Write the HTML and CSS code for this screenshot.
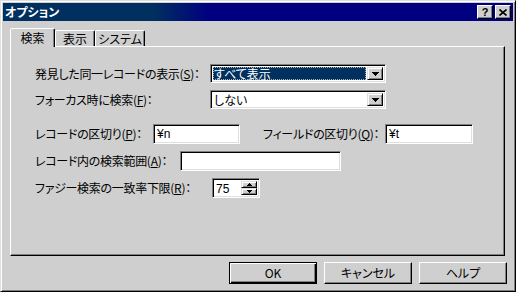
FILE: index.html
```html
<!DOCTYPE html>
<html lang="ja">
<head>
<meta charset="utf-8">
<title>オプション</title>
<link rel="stylesheet" href="styles.css">
</head>
<body>
<div class="window">
  <div class="titlebar">
    <span class="title">オプション</span>
    <div class="tbtns">
      <div class="tbtn"><span class="q">?</span></div>
      <div class="tbtn"><svg width="8" height="7" viewBox="0 0 8 7"><path d="M0.5 0.5L7.5 6.5M7.5 0.5L0.5 6.5" stroke="#000" stroke-width="1.6" fill="none"/></svg></div>
    </div>
  </div>
  <div class="content">
    <div class="tabs">
      <div class="tab active t1">検索</div>
      <div class="tab t2">表示</div>
      <div class="tab t3">システム</div>
    </div>
    <div class="panel">
      <div class="row">
        <span class="lbl w-combo">発見した同一レコードの表示(<u>S</u>)：</span>
        <div class="combo">
          <div class="combo-value sel">すべて表示</div>
          <div class="ddbtn"><svg width="7" height="4" viewBox="0 0 7 4"><path d="M0 0h7v1H0zM1 1h5v1H1zM2 2h3v1H2zM3 3h1v1H3z"/></svg></div>
        </div>
      </div>
      <div class="row">
        <span class="lbl w-combo">フォーカス時に検索(<u>F</u>)：</span>
        <div class="combo">
          <div class="combo-value">しない</div>
          <div class="ddbtn"><svg width="7" height="4" viewBox="0 0 7 4"><path d="M0 0h7v1H0zM1 1h5v1H1zM2 2h3v1H2zM3 3h1v1H3z"/></svg></div>
        </div>
      </div>
      <div class="row tall sep">
        <span class="lbl w-rec">レコードの区切り(<u>P</u>)：</span>
        <div class="field f-rec">¥n</div>
        <span class="lbl w-fld">フィールドの区切り(<u>Q</u>)：</span>
        <div class="field f-fld">¥t</div>
      </div>
      <div class="row tall">
        <span class="lbl w-range">レコード内の検索範囲(<u>A</u>)：</span>
        <div class="field f-range"></div>
      </div>
      <div class="row tall">
        <span class="lbl w-fuzzy">ファジー検索の一致率下限(<u>R</u>)：</span>
        <div class="field spin">
          <span class="spin-val">75</span>
          <div class="spinbtns">
            <div class="sbtn"><svg width="5" height="3" viewBox="0 0 5 3"><path d="M2 0h1v1H2zM1 1h3v1H1zM0 2h5v1H0z"/></svg></div>
            <div class="sbtn"><svg width="5" height="3" viewBox="0 0 5 3"><path d="M0 0h5v1H0zM1 1h3v1H1zM2 2h1v1H2z"/></svg></div>
          </div>
        </div>
      </div>
    </div>
    <div class="btnrow">
      <div class="btn default"><span>OK</span></div>
      <div class="btn"><span>キャンセル</span></div>
      <div class="btn"><span>ヘルプ</span></div>
    </div>
  </div>
</div>
</body>
</html>
```

FILE: styles.css
```css
* { box-sizing: border-box; }
html, body {
  margin: 0;
  padding: 0;
  background: #cfcfcf;
}
body {
  font-family: "Noto Sans CJK JP", "Liberation Sans", sans-serif;
  font-size: 12px;
  font-feature-settings: "palt";
  line-height: 1;
  color: #000;
}
.window {
  width: 516px;
  height: 292px;
  background: #cfcfcf;
  border: 1px solid;
  border-color: #dfdfdf #000 #000 #dfdfdf;
  box-shadow: inset 1px 1px #fff, inset -1px -1px #808080;
  padding: 2px;
  display: flex;
  flex-direction: column;
}
.titlebar {
  height: 18px;
  flex: none;
  background: linear-gradient(to right, #00305f 0, #00305f 150px, #000080 205px, #000080 100%);
  display: flex;
  align-items: center;
  justify-content: space-between;
  padding: 0 2px 0 2px;
}
.title {
  color: #fff;
  font-weight: bold;
  font-size: 12px;
}
.tbtns {
  display: flex;
  gap: 2px;
}
.tbtn {
  width: 16px;
  height: 14px;
  background: #cfcfcf;
  border: 1px solid;
  border-color: #fff #000 #000 #fff;
  box-shadow: inset -1px -1px #808080;
  display: flex;
  align-items: center;
  justify-content: center;
}
.q {
  font-family: "Liberation Sans", sans-serif;
  font-weight: bold;
  font-size: 11px;
  line-height: 1;
}
.content {
  flex: 1;
  padding: 7px 6px 0 7px;
  display: flex;
  flex-direction: column;
}
.tabs {
  display: flex;
  align-items: flex-start;
  height: 18px;
  flex: none;
  position: relative;
  z-index: 1;
}
.tab {
  height: 16px;
  margin-top: 2px;
  border: 1px solid;
  border-bottom: none;
  border-color: #fff #000 transparent #fff;
  box-shadow: inset -1px 0 #808080;
  border-radius: 2px 2px 0 0;
  display: flex;
  align-items: center;
  justify-content: center;
  background: #cfcfcf;
}
.tab.active {
  height: 19px;
  margin-top: 0;
}
.t1 { width: 45px; }
.t2 { width: 40px; }
.t3 { width: 50px; }
.panel {
  height: 210px;
  flex: none;
  margin-right: 2px;
  border: 1px solid;
  border-color: #fff #000 #000 #fff;
  box-shadow: inset -1px -1px #808080;
  padding: 17px 0 0 24px;
  display: flex;
  flex-direction: column;
  gap: 7px;
}
.row {
  display: flex;
  align-items: center;
  height: 19px;
}
.row.tall { height: 20px; }
.row.sep { margin-top: 8px; }
.lbl {
  flex: none;
  white-space: nowrap;
  letter-spacing: -0.3px;
}
.w-combo { width: 175px; }
.w-rec { width: 118px; }
.w-fld { width: 122px; margin-left: 23px; }
.w-range { width: 145px; }
.w-fuzzy { width: 177px; }
.combo {
  width: 176px;
  height: 19px;
  background: #fff;
  border: 1px solid;
  border-color: #808080 #fff #fff #808080;
  box-shadow: inset 1px 1px #000, inset -1px -1px #dfdfdf;
  display: flex;
  padding: 2px;
}
.combo-value {
  flex: 1;
  display: flex;
  align-items: center;
  padding-left: 1px;
  margin-right: 1px;
}
.combo-value.sel {
  background: #00305f;
  color: #fff;
  outline: 1px dotted #b0b0b0;
  outline-offset: -1px;
}
.ddbtn {
  width: 16px;
  flex: none;
  background: #cfcfcf;
  border: 1px solid;
  border-color: #dfdfdf #000 #000 #dfdfdf;
  box-shadow: inset 1px 1px #fff, inset -1px -1px #808080;
  display: flex;
  align-items: center;
  justify-content: center;
}
.field {
  height: 20px;
  background: #fff;
  border: 1px solid;
  border-color: #808080 #fff #fff #808080;
  box-shadow: inset 1px 1px #000, inset -1px -1px #dfdfdf;
  padding: 0 3px;
  display: flex;
  align-items: center;
  font-family: "Liberation Sans", "Noto Sans CJK JP", sans-serif;
}
.f-rec { width: 87px; }
.f-fld { width: 88px; }
.f-range { width: 161px; }
.spin {
  width: 48px;
  padding: 2px 2px 2px 3px;
  justify-content: space-between;
}
.spin-val { padding-top: 1px; }
.spinbtns {
  width: 16px;
  height: 100%;
  display: flex;
  flex-direction: column;
}
.sbtn {
  flex: 1;
  background: #cfcfcf;
  border: 1px solid;
  border-color: #dfdfdf #000 #000 #dfdfdf;
  box-shadow: inset 1px 1px #fff, inset -1px -1px #808080;
  display: flex;
  align-items: center;
  justify-content: center;
}
.btnrow {
  display: flex;
  justify-content: flex-end;
  gap: 7px;
  margin-top: 6px;
}
.btn {
  width: 88px;
  height: 22px;
  border: 1px solid;
  border-color: #fff #000 #000 #fff;
  box-shadow: inset -1px -1px #808080;
  background: #cfcfcf;
  display: flex;
  align-items: center;
  justify-content: center;
}
.btn.default {
  border-color: #000;
  box-shadow: inset 1px 1px #fff, inset -1px -1px #000, inset -2px -2px #808080;
}
```
